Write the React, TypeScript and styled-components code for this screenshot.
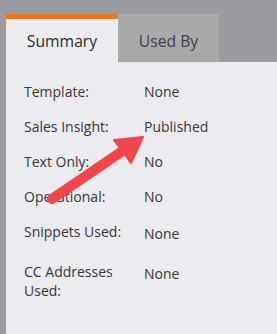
import styled, { createGlobalStyle } from "styled-components";

const GlobalStyle = createGlobalStyle`
  html, body {
    margin: 0;
    padding: 0;
    background: #9b9a9f;
    font-family: "Open Sans", "Liberation Sans", sans-serif;
  }
`;

type Row = { label: string; value: string; shift?: number; gapTop?: number };

const rows: Row[] = [
  { label: "Template:", value: "None" },
  { label: "Sales Insight:", value: "Published" },
  { label: "Text Only:", value: "No" },
  { label: "Operational:", value: "No" },
  { label: "Snippets Used:", value: "None", shift: 2 },
  { label: "CC Addresses Used:", value: "None", shift: 2, gapTop: 3 },
];

const App = () => (
  <>
    <GlobalStyle />
    <Page>
      <Panel>
        <Tabs>
          <Tab $active>Summary</Tab>
          <Tab>Used By</Tab>
        </Tabs>
        <Body>
          {rows.map((r) => (
            <FieldRow key={r.label} $gapTop={r.gapTop ?? 0}>
              <Label>{r.label}</Label>
              <Value $shift={r.shift ?? 0}>{r.value}</Value>
            </FieldRow>
          ))}
        </Body>
      </Panel>
      <Arrow viewBox="0 0 277 334" width="277" height="334">
        <line x1="52" y1="199" x2="124" y2="150" stroke="#f3464a" strokeWidth="10" strokeLinecap="round" />
        <polygon points="143,137 114,140 131,163" fill="#f3464a" strokeLinejoin="round" stroke="#f3464a" strokeWidth="2" />
      </Arrow>
    </Page>
  </>
);

export default App;

const Page = styled.div`
  position: relative;
  width: 277px;
  height: 334px;
  overflow: hidden;
  padding: 14px 0 0 6px;
  box-sizing: border-box;
`;

const Panel = styled.div`
  display: flex;
  flex-direction: column;
  height: 100%;
`;

const Tabs = styled.div`
  display: flex;
  height: 48px;
`;

const Tab = styled.div<{ $active?: boolean }>`
  display: flex;
  align-items: center;
  justify-content: center;
  box-sizing: border-box;
  width: ${(p) => (p.$active ? "112px" : "101px")};
  padding-top: ${(p) => (p.$active ? "1px" : "5px")};
  border-top: ${(p) => (p.$active ? "5px solid #e87722" : "none")};
  background: ${(p) => (p.$active ? "#ececf0" : "#a9a9ac")};
  color: ${(p) => (p.$active ? "#2b2b2b" : "#3c3e44")};
  font-size: 15.7px;
`;

const Body = styled.div`
  flex: 1;
  background: #ececf0;
  padding: 20px 0 0 18px;
  display: flex;
  flex-direction: column;
  gap: 16px;
`;

const FieldRow = styled.div<{ $gapTop: number }>`
  display: grid;
  grid-template-columns: 120px 1fr;
  margin-top: ${(p) => p.$gapTop}px;
  font-size: 14px;
  line-height: 19px;
  color: #363636;
`;

const Label = styled.div`
  padding-right: 8px;
`;

const Value = styled.div<{ $shift: number }>`
  padding-top: ${(p) => p.$shift}px;
`;

const Arrow = styled.svg`
  position: absolute;
  left: 0;
  top: 0;
  pointer-events: none;
`;
